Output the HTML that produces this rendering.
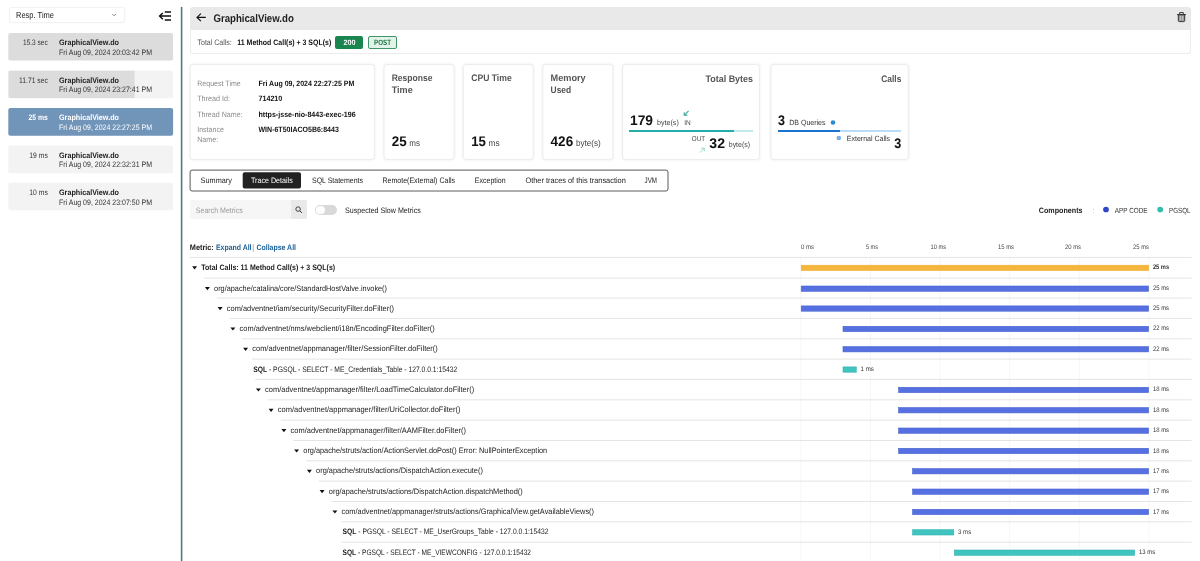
<!DOCTYPE html>
<html>
<head>
<meta charset="utf-8">
<title>GraphicalView.do</title>
<style>
*{box-sizing:border-box;margin:0;padding:0}
html,body{width:1200px;height:561px;overflow:hidden;background:#fff}
body{font-family:"Liberation Sans",sans-serif;color:#222;position:relative;font-size:8px}
.abs{position:absolute}
.t{position:absolute;white-space:nowrap;line-height:1;transform-origin:0 0}
b{font-weight:bold}
#dd{left:8.8px;top:7px;width:116px;height:16px;border-radius:3px;border:1px solid #f2f2f2;box-shadow:0 0 2px rgba(0,0,0,.04);background:#fff}
.li{position:absolute;left:8px;width:165px;height:28px;border-radius:2px;background:#f3f3f3;overflow:hidden}
.li i{position:absolute;left:0;top:0;bottom:0;background:#dddddd}
.li.sel{background:#7194b9}
#divider{left:180.8px;top:7px;width:1.7px;height:561px;background:#4f7a80}
#hdr{left:189.6px;top:7px;width:1001.5px;height:23.3px;background:#e9e9e9;border-radius:3px 3px 0 0}
#sub{left:189.6px;top:30px;width:1001.5px;height:24px;background:#fff;border:1px solid #ececec;border-top:none;border-radius:0 0 3px 3px}
.badge{position:absolute;top:35.8px;height:13.2px;border-radius:2px}
.card{position:absolute;top:64.3px;height:95.6px;background:#fff;border:1px solid #ebebeb;border-radius:3px;box-shadow:0 0 2px rgba(0,0,0,.06)}
#tabs{left:189.6px;top:169.6px;width:479px;height:22px;border:1px solid #555;border-radius:2px;background:#fff}
#tabsel{left:242.7px;top:172.3px;width:58.3px;height:16.2px;background:#222;border-radius:2px}
.row{position:absolute;height:1px;background:#e6e6e6}
.tri{position:absolute;width:0;height:0;border-left:2.2px solid transparent;border-right:2.2px solid transparent;border-top:3px solid #111}
.bar{position:absolute;height:5.8px;background:#566fe0}
.bar.y{background:#f4b73f}
.bar.g{background:#3fc5c1}
.grid{position:absolute;top:257px;width:1px;height:304px;background:#f1f1f1}
</style>
</head>
<body>
<!-- SIDEBAR -->
<div class="abs" id="dd"></div>
<svg class="abs" style="left:0;top:0" width="182" height="30" viewBox="0 0 182 30"><path d="M112.3 14L114.1 15.8L115.9 14" fill="none" stroke="#777" stroke-width="0.9"/><path d="M164.8 12.05H171M159.8 16.05H171M164.8 19.95H171M162.8 12.9L159.6 16.05L162.8 19.2" fill="none" stroke="#111" stroke-width="1.45"/></svg>

<svg class="abs" style="left:0;top:0" width="186" height="561" viewBox="0 0 186 561"><defs><clipPath id="c2"><rect x="8.3" y="70.4" width="164.8" height="27.9" rx="2"/></clipPath></defs><rect x="8.3" y="32.9" width="164.8" height="27.7" rx="2" fill="#dcdcdc"/><rect x="8.3" y="70.4" width="164.8" height="27.9" rx="2" fill="#f3f3f3"/><rect x="8.3" y="107.9" width="164.8" height="27.8" rx="2" fill="#7194b9"/><rect x="8.3" y="145.4" width="164.8" height="27.8" rx="2" fill="#f3f3f3"/><rect x="8.3" y="182.8" width="164.8" height="27.4" rx="2" fill="#f3f3f3"/><rect x="8.3" y="70.4" width="126.3" height="27.9" fill="#dcdcdc" clip-path="url(#c2)"/><rect x="180.8" y="7" width="1.6" height="554" fill="#4f7a80"/></svg>

<!-- HEADER -->
<div class="abs" id="hdr"></div>
<svg class="abs" style="left:189px;top:7px" width="1003" height="24" viewBox="189 7 1003 24"><path d="M205.8 17.4H197.2M200.9 13.7L197 17.4L200.9 21.1" fill="none" stroke="#111" stroke-width="1.15"/><path d="M1177 14.6H1186M1179.7 14.4V12.6H1183.3V14.4" fill="none" stroke="#333" stroke-width="1"/><path d="M1178.3 14.8V20.6Q1178.3 21.6 1179.3 21.6H1183.7Q1184.7 21.6 1184.7 20.6V14.8Z" fill="#9a9a9a" stroke="#333" stroke-width="1"/><path d="M1180.4 16V20.4M1182.6 16V20.4" stroke="#ddd" stroke-width="0.6"/></svg>
<div class="abs" id="sub"></div>
<div class="badge" style="left:335.4px;width:28.1px;background:#1b8550"></div>
<div class="badge" style="left:368px;width:28.9px;background:#e4f3ea;border:1px solid #3f9466"></div>

<!-- CARDS -->
<svg class="abs" style="left:0;top:0" width="1200" height="170" viewBox="0 0 1200 170"><rect x="189.4" y="63.7" width="185.8" height="96.6" rx="3.5" fill="none" stroke="#000" stroke-opacity="0.025" stroke-width="2.4"/><rect x="190.2" y="64.5" width="184.2" height="95" rx="3" fill="#fff" stroke="#ececec" stroke-width="1"/><rect x="383.3" y="63.7" width="71.5" height="96.6" rx="3.5" fill="none" stroke="#000" stroke-opacity="0.025" stroke-width="2.4"/><rect x="384.1" y="64.5" width="69.9" height="95" rx="3" fill="#fff" stroke="#ececec" stroke-width="1"/><rect x="462.5" y="63.7" width="71.5" height="96.6" rx="3.5" fill="none" stroke="#000" stroke-opacity="0.025" stroke-width="2.4"/><rect x="463.3" y="64.5" width="69.9" height="95" rx="3" fill="#fff" stroke="#ececec" stroke-width="1"/><rect x="542.0" y="63.7" width="71.6" height="96.6" rx="3.5" fill="none" stroke="#000" stroke-opacity="0.025" stroke-width="2.4"/><rect x="542.8" y="64.5" width="70.0" height="95" rx="3" fill="#fff" stroke="#ececec" stroke-width="1"/><rect x="621.7" y="63.7" width="138.6" height="96.6" rx="3.5" fill="none" stroke="#000" stroke-opacity="0.025" stroke-width="2.4"/><rect x="622.5" y="64.5" width="137.0" height="95" rx="3" fill="#fff" stroke="#ececec" stroke-width="1"/><rect x="770.2" y="63.7" width="138.9" height="96.6" rx="3.5" fill="none" stroke="#000" stroke-opacity="0.025" stroke-width="2.4"/><rect x="771.0" y="64.5" width="137.3" height="95" rx="3" fill="#fff" stroke="#ececec" stroke-width="1"/></svg>
<svg class="abs" style="left:682.8px;top:109.7px" width="6.5" height="6.5" viewBox="0 0 7 7"><path d="M6 1L1.3 5.7M1.3 2.3V5.7H4.7" fill="none" stroke="#2fa58f" stroke-width="1.1"/></svg>
<div class="abs" style="left:629.3px;top:130.3px;width:124px;height:1.8px;background:#c2e8ea"></div>
<div class="abs" style="left:629.3px;top:130.3px;width:105.2px;height:1.8px;background:#22adab"></div>
<svg class="abs" style="left:699.3px;top:146.5px" width="6.5" height="6.5" viewBox="0 0 7 7"><path d="M1 6L5.7 1.3M2.3 1.3H5.7V4.7" fill="none" stroke="#7fd4c4" stroke-width="0.9"/></svg>
<svg class="abs" style="left:826px;top:116px" width="20" height="28" viewBox="826 116 20 28"><circle cx="833" cy="122.5" r="2.3" fill="#2a8ad4"/><circle cx="838.8" cy="138" r="2.3" fill="#79afe2"/></svg>
<div class="abs" style="left:778px;top:130.3px;width:123.3px;height:1.8px;background:#bcdcf6"></div>
<div class="abs" style="left:778px;top:130.3px;width:61.5px;height:1.8px;background:#1a73d1"></div>

<!-- TABS -->
<svg class="abs" style="left:185px;top:165px" width="490" height="32" viewBox="185 165 490 32"><rect x="190.1" y="170.1" width="477.9" height="20.9" rx="2" fill="#fff" stroke="#5a5a5a" stroke-width="1"/><rect x="242.7" y="172.3" width="58.3" height="16.2" rx="2" fill="#222"/></svg>

<!-- SEARCH -->
<div class="abs" style="left:190.2px;top:200.4px;width:117.1px;height:18.4px;background:#f6f6f6;border-radius:2px"></div>
<div class="abs" style="left:290.8px;top:200.4px;width:16.5px;height:18.4px;background:#e9e9e9;border-radius:0 2px 2px 0"></div>
<svg class="abs" style="left:295px;top:206.3px" width="7.5" height="7.5" viewBox="0 0 9 9"><circle cx="3.7" cy="3.7" r="2.7" fill="none" stroke="#333" stroke-width="1.1"/><path d="M5.7 5.7L8.3 8.3" stroke="#333" stroke-width="1.2"/></svg>
<div class="abs" style="left:315.2px;top:204.6px;width:22.3px;height:10.4px;border-radius:5.2px;background:#d9d9d9"></div>
<div class="abs" style="left:316.2px;top:205.6px;width:8.4px;height:8.4px;border-radius:50%;background:#fff"></div>
<svg class="abs" style="left:1100px;top:204px" width="66" height="12" viewBox="1100 204 66 12"><circle cx="1106" cy="209.5" r="2.85" fill="#2f47c8"/><circle cx="1160.2" cy="209.5" r="2.85" fill="#2fbfaa"/></svg>

<svg class="abs" style="left:0;top:0" width="1200" height="561" viewBox="0 0 1200 561"><rect x="800.4" y="257.4" width="1" height="304" fill="#f7f7f7"/>
<rect x="870.0" y="257.4" width="1" height="304" fill="#f7f7f7"/>
<rect x="939.6" y="257.4" width="1" height="304" fill="#f7f7f7"/>
<rect x="1009.2" y="257.4" width="1" height="304" fill="#f7f7f7"/>
<rect x="1078.8" y="257.4" width="1" height="304" fill="#f7f7f7"/>
<rect x="1148.4" y="257.4" width="1" height="304" fill="#f7f7f7"/>
<path d="M192.1 266.3h5l-2.5 3.2z" fill="#111"/>
<rect x="189.6" y="256.9" width="1001.9" height="1" fill="#e4e4e4"/>
<rect x="801.2" y="265.2" width="347.4" height="5.3" fill="#f5b63e" stroke="#f0b030" stroke-width="0.6"/>
<path d="M204.9 287.1h5l-2.5 3.2z" fill="#111"/>
<rect x="204.2" y="277.6" width="987.4" height="1" fill="#e4e4e4"/>
<rect x="801.2" y="286.0" width="347.4" height="5.3" fill="#5670e2" stroke="#4863d0" stroke-width="0.6"/>
<path d="M217.6 307.0h5l-2.5 3.2z" fill="#111"/>
<rect x="216.9" y="297.6" width="974.6" height="1" fill="#e4e4e4"/>
<rect x="801.2" y="305.9" width="347.4" height="5.3" fill="#5670e2" stroke="#4863d0" stroke-width="0.6"/>
<path d="M230.4 327.4h5l-2.5 3.2z" fill="#111"/>
<rect x="229.7" y="317.9" width="961.9" height="1" fill="#e4e4e4"/>
<rect x="843.0" y="326.3" width="305.6" height="5.3" fill="#5670e2" stroke="#4863d0" stroke-width="0.6"/>
<path d="M243.1 347.7h5l-2.5 3.2z" fill="#111"/>
<rect x="242.4" y="338.3" width="949.1" height="1" fill="#e4e4e4"/>
<rect x="843.0" y="346.6" width="305.6" height="5.3" fill="#5670e2" stroke="#4863d0" stroke-width="0.6"/>
<rect x="252.2" y="358.6" width="939.3" height="1" fill="#e4e4e4"/>
<rect x="843.0" y="366.9" width="13.3" height="5.3" fill="#3fc4c0" stroke="#35b5b2" stroke-width="0.6"/>
<path d="M255.9 388.4h5l-2.5 3.2z" fill="#111"/>
<rect x="255.2" y="378.9" width="936.4" height="1" fill="#e4e4e4"/>
<rect x="898.6" y="387.3" width="250.0" height="5.3" fill="#5670e2" stroke="#4863d0" stroke-width="0.6"/>
<path d="M268.6 408.7h5l-2.5 3.2z" fill="#111"/>
<rect x="267.9" y="399.3" width="923.6" height="1" fill="#e4e4e4"/>
<rect x="898.6" y="407.6" width="250.0" height="5.3" fill="#5670e2" stroke="#4863d0" stroke-width="0.6"/>
<path d="M281.4 429.1h5l-2.5 3.2z" fill="#111"/>
<rect x="280.6" y="419.6" width="910.9" height="1" fill="#e4e4e4"/>
<rect x="898.6" y="428.0" width="250.0" height="5.3" fill="#5670e2" stroke="#4863d0" stroke-width="0.6"/>
<path d="M294.1 449.4h5l-2.5 3.2z" fill="#111"/>
<rect x="293.4" y="440.0" width="898.1" height="1" fill="#e4e4e4"/>
<rect x="898.6" y="448.3" width="250.0" height="5.3" fill="#5670e2" stroke="#4863d0" stroke-width="0.6"/>
<path d="M306.9 469.7h5l-2.5 3.2z" fill="#111"/>
<rect x="306.1" y="460.3" width="885.4" height="1" fill="#e4e4e4"/>
<rect x="912.6" y="468.6" width="236.0" height="5.3" fill="#5670e2" stroke="#4863d0" stroke-width="0.6"/>
<path d="M319.6 490.1h5l-2.5 3.2z" fill="#111"/>
<rect x="318.9" y="480.6" width="872.6" height="1" fill="#e4e4e4"/>
<rect x="912.6" y="489.0" width="236.0" height="5.3" fill="#5670e2" stroke="#4863d0" stroke-width="0.6"/>
<path d="M332.4 510.4h5l-2.5 3.2z" fill="#111"/>
<rect x="331.6" y="501.0" width="859.9" height="1" fill="#e4e4e4"/>
<rect x="912.6" y="509.3" width="236.0" height="5.3" fill="#5670e2" stroke="#4863d0" stroke-width="0.6"/>
<rect x="341.6" y="521.3" width="849.9" height="1" fill="#e4e4e4"/>
<rect x="912.6" y="529.7" width="41.2" height="5.3" fill="#3fc4c0" stroke="#35b5b2" stroke-width="0.6"/>
<rect x="341.6" y="541.7" width="849.9" height="1" fill="#e4e4e4"/>
<rect x="954.3" y="550.0" width="180.4" height="5.3" fill="#3fc4c0" stroke="#35b5b2" stroke-width="0.6"/></svg>
<svg class="abs" style="left:0;top:0;will-change:transform" width="1200" height="561" viewBox="0 0 1200 561" font-family="'Liberation Sans',sans-serif" text-rendering="geometricPrecision">
<text x="16.0" y="18.1" font-size="8.8" fill="#222" textLength="38.0" lengthAdjust="spacingAndGlyphs">Resp. Time</text>
<text x="23.0" y="45.3" font-size="7.9" fill="#333" textLength="24.8" lengthAdjust="spacingAndGlyphs">15.3 sec</text>
<text x="59.0" y="45.3" font-size="7.9" fill="#222" font-weight="bold" textLength="60.0" lengthAdjust="spacingAndGlyphs">GraphicalView.do</text>
<text x="59.0" y="54.8" font-size="7.9" fill="#333" textLength="93.0" lengthAdjust="spacingAndGlyphs">Fri Aug 09, 2024 20:03:42 PM</text>
<text x="19.0" y="82.8" font-size="7.9" fill="#333" textLength="28.8" lengthAdjust="spacingAndGlyphs">11.71 sec</text>
<text x="59.0" y="82.8" font-size="7.9" fill="#222" font-weight="bold" textLength="60.0" lengthAdjust="spacingAndGlyphs">GraphicalView.do</text>
<text x="59.0" y="92.3" font-size="7.9" fill="#333" textLength="93.0" lengthAdjust="spacingAndGlyphs">Fri Aug 09, 2024 23:27:41 PM</text>
<text x="28.5" y="120.3" font-size="7.9" fill="#fff" font-weight="bold" textLength="19.3" lengthAdjust="spacingAndGlyphs">25 ms</text>
<text x="59.0" y="120.3" font-size="7.9" fill="#fff" font-weight="bold" textLength="60.0" lengthAdjust="spacingAndGlyphs">GraphicalView.do</text>
<text x="59.0" y="129.8" font-size="7.9" fill="#fff" textLength="93.0" lengthAdjust="spacingAndGlyphs">Fri Aug 09, 2024 22:27:25 PM</text>
<text x="29.3" y="157.8" font-size="7.9" fill="#333" textLength="18.5" lengthAdjust="spacingAndGlyphs">19 ms</text>
<text x="59.0" y="157.8" font-size="7.9" fill="#222" font-weight="bold" textLength="60.0" lengthAdjust="spacingAndGlyphs">GraphicalView.do</text>
<text x="59.0" y="167.3" font-size="7.9" fill="#333" textLength="93.0" lengthAdjust="spacingAndGlyphs">Fri Aug 09, 2024 22:32:31 PM</text>
<text x="29.3" y="195.3" font-size="7.9" fill="#333" textLength="18.5" lengthAdjust="spacingAndGlyphs">10 ms</text>
<text x="59.0" y="195.3" font-size="7.9" fill="#222" font-weight="bold" textLength="60.0" lengthAdjust="spacingAndGlyphs">GraphicalView.do</text>
<text x="59.0" y="204.8" font-size="7.9" fill="#333" textLength="93.0" lengthAdjust="spacingAndGlyphs">Fri Aug 09, 2024 23:07:50 PM</text>
<text x="213.4" y="21.6" font-size="11" fill="#222" font-weight="bold" textLength="80.4" lengthAdjust="spacingAndGlyphs">GraphicalView.do</text>
<text x="197.5" y="45.3" font-size="7.9" fill="#555" textLength="34.3" lengthAdjust="spacingAndGlyphs">Total Calls:</text>
<text x="237.3" y="45.3" font-size="7.9" fill="#111" font-weight="bold" textLength="93.9" lengthAdjust="spacingAndGlyphs">11 Method Call(s) + 3 SQL(s)</text>
<text x="343.5" y="45.2" font-size="7.7" fill="#fff" font-weight="bold" textLength="12.0" lengthAdjust="spacingAndGlyphs">200</text>
<text x="374.0" y="45.2" font-size="7.7" fill="#1b7a45" font-weight="bold" textLength="17.0" lengthAdjust="spacingAndGlyphs">POST</text>
<text x="197.2" y="85.8" font-size="7.7" fill="#8a8a8a" textLength="43.6" lengthAdjust="spacingAndGlyphs">Request Time</text>
<text x="258.5" y="85.8" font-size="7.7" fill="#111" font-weight="bold" textLength="95.8" lengthAdjust="spacingAndGlyphs">Fri Aug 09, 2024 22:27:25 PM</text>
<text x="197.2" y="101.2" font-size="7.7" fill="#8a8a8a" textLength="32.7" lengthAdjust="spacingAndGlyphs">Thread Id:</text>
<text x="258.5" y="101.2" font-size="7.7" fill="#111" font-weight="bold" textLength="23.8" lengthAdjust="spacingAndGlyphs">714210</text>
<text x="197.2" y="116.5" font-size="7.7" fill="#8a8a8a" textLength="45.4" lengthAdjust="spacingAndGlyphs">Thread Name:</text>
<text x="258.5" y="116.5" font-size="7.7" fill="#111" font-weight="bold" textLength="97.1" lengthAdjust="spacingAndGlyphs">https-jsse-nio-8443-exec-196</text>
<text x="197.2" y="132.0" font-size="7.7" fill="#8a8a8a" textLength="26.7" lengthAdjust="spacingAndGlyphs">Instance</text>
<text x="197.2" y="141.8" font-size="7.7" fill="#8a8a8a" textLength="21.1" lengthAdjust="spacingAndGlyphs">Name:</text>
<text x="258.5" y="132.0" font-size="7.7" fill="#111" font-weight="bold" textLength="80.3" lengthAdjust="spacingAndGlyphs">WIN-6T50IACO5B6:8443</text>
<text x="391.7" y="81.2" font-size="9.5" fill="#555" font-weight="bold" textLength="40.7" lengthAdjust="spacingAndGlyphs">Response</text>
<text x="391.7" y="92.9" font-size="9.5" fill="#555" font-weight="bold" textLength="21.0" lengthAdjust="spacingAndGlyphs">Time</text>
<text x="391.7" y="146.3" font-size="13.9" fill="#111" font-weight="bold" textLength="14.9" lengthAdjust="spacingAndGlyphs">25</text>
<text x="409.3" y="146.3" font-size="8.8" fill="#444" textLength="10.7" lengthAdjust="spacingAndGlyphs">ms</text>
<text x="471.2" y="81.2" font-size="9.5" fill="#555" font-weight="bold" textLength="40.5" lengthAdjust="spacingAndGlyphs">CPU Time</text>
<text x="471.2" y="146.3" font-size="13.9" fill="#111" font-weight="bold" textLength="14.7" lengthAdjust="spacingAndGlyphs">15</text>
<text x="488.5" y="146.3" font-size="8.8" fill="#444" textLength="11.1" lengthAdjust="spacingAndGlyphs">ms</text>
<text x="550.6" y="81.2" font-size="9.5" fill="#555" font-weight="bold" textLength="35.1" lengthAdjust="spacingAndGlyphs">Memory</text>
<text x="550.6" y="92.9" font-size="9.5" fill="#555" font-weight="bold" textLength="20.6" lengthAdjust="spacingAndGlyphs">Used</text>
<text x="550.6" y="146.3" font-size="13.9" fill="#111" font-weight="bold" textLength="22.6" lengthAdjust="spacingAndGlyphs">426</text>
<text x="576.0" y="146.3" font-size="8.8" fill="#444" textLength="24.8" lengthAdjust="spacingAndGlyphs">byte(s)</text>
<text x="705.5" y="81.5" font-size="9.5" fill="#555" font-weight="bold" textLength="47.5" lengthAdjust="spacingAndGlyphs">Total Bytes</text>
<text x="630.0" y="125.0" font-size="13.9" fill="#111" font-weight="bold" textLength="23.0" lengthAdjust="spacingAndGlyphs">179</text>
<text x="657.0" y="124.7" font-size="7.55" fill="#444" textLength="21.8" lengthAdjust="spacingAndGlyphs">byte(s)</text>
<text x="684.3" y="124.7" font-size="7.1" fill="#444" textLength="6.5" lengthAdjust="spacingAndGlyphs">IN</text>
<text x="691.8" y="141.3" font-size="7.1" fill="#444" textLength="13.2" lengthAdjust="spacingAndGlyphs">OUT</text>
<text x="709.3" y="147.5" font-size="13.9" fill="#111" font-weight="bold" textLength="15.7" lengthAdjust="spacingAndGlyphs">32</text>
<text x="728.8" y="147.2" font-size="7.55" fill="#444" textLength="21.2" lengthAdjust="spacingAndGlyphs">byte(s)</text>
<text x="881.3" y="81.5" font-size="9.5" fill="#555" font-weight="bold" textLength="20.0" lengthAdjust="spacingAndGlyphs">Calls</text>
<text x="778.0" y="125.0" font-size="13.9" fill="#111" font-weight="bold" textLength="7.0" lengthAdjust="spacingAndGlyphs">3</text>
<text x="789.3" y="124.7" font-size="7.55" fill="#333" textLength="36.2" lengthAdjust="spacingAndGlyphs">DB Queries</text>
<text x="846.8" y="141.0" font-size="7.55" fill="#333" textLength="43.2" lengthAdjust="spacingAndGlyphs">External Calls</text>
<text x="894.3" y="147.5" font-size="13.9" fill="#111" font-weight="bold" textLength="7.0" lengthAdjust="spacingAndGlyphs">3</text>
<text x="200.6" y="183.3" font-size="7.9" fill="#222" textLength="31.3" lengthAdjust="spacingAndGlyphs">Summary</text>
<text x="251.0" y="183.3" font-size="7.9" fill="#fff" textLength="41.7" lengthAdjust="spacingAndGlyphs">Trace Details</text>
<text x="312.0" y="183.3" font-size="7.9" fill="#222" textLength="51.0" lengthAdjust="spacingAndGlyphs">SQL Statements</text>
<text x="382.5" y="183.3" font-size="7.9" fill="#222" textLength="72.5" lengthAdjust="spacingAndGlyphs">Remote(External) Calls</text>
<text x="474.8" y="183.3" font-size="7.9" fill="#222" textLength="30.8" lengthAdjust="spacingAndGlyphs">Exception</text>
<text x="525.4" y="183.3" font-size="7.9" fill="#222" textLength="100.4" lengthAdjust="spacingAndGlyphs">Other traces of this transaction</text>
<text x="644.6" y="183.3" font-size="7.9" fill="#222" textLength="12.4" lengthAdjust="spacingAndGlyphs">JVM</text>
<text x="195.8" y="212.5" font-size="7.9" fill="#999" textLength="46.9" lengthAdjust="spacingAndGlyphs">Search Metrics</text>
<text x="345.0" y="212.5" font-size="7.9" fill="#222" textLength="75.8" lengthAdjust="spacingAndGlyphs">Suspected Slow Metrics</text>
<text x="1038.8" y="212.7" font-size="7.9" fill="#222" font-weight="bold" textLength="43.7" lengthAdjust="spacingAndGlyphs">Components</text>
<text x="1092.7" y="212.5" font-size="7.9" fill="#888" textLength="1.3" lengthAdjust="spacingAndGlyphs">:</text>
<text x="1114.8" y="212.5" font-size="7.4" fill="#333" textLength="32.7" lengthAdjust="spacingAndGlyphs">APP CODE</text>
<text x="1169.0" y="212.5" font-size="7.4" fill="#333" textLength="21.5" lengthAdjust="spacingAndGlyphs">PGSQL</text>
<text x="189.8" y="250.2" font-size="7.9" fill="#222" font-weight="bold" textLength="24.0" lengthAdjust="spacingAndGlyphs">Metric:</text>
<text x="216.0" y="250.2" font-size="7.9" fill="#1a5f96" font-weight="bold" textLength="35.5" lengthAdjust="spacingAndGlyphs">Expand All</text>
<text x="252.6" y="250.2" font-size="7.9" fill="#333" textLength="1.2" lengthAdjust="spacingAndGlyphs">|</text>
<text x="256.5" y="250.2" font-size="7.9" fill="#1a5f96" font-weight="bold" textLength="39.5" lengthAdjust="spacingAndGlyphs">Collapse All</text>
<text x="801.0" y="248.7" font-size="6.6" fill="#444" textLength="13.0" lengthAdjust="spacingAndGlyphs">0 ms</text>
<text x="866.0" y="248.7" font-size="6.6" fill="#444" textLength="12.0" lengthAdjust="spacingAndGlyphs">5 ms</text>
<text x="930.5" y="248.7" font-size="6.6" fill="#444" textLength="15.5" lengthAdjust="spacingAndGlyphs">10 ms</text>
<text x="998.0" y="248.7" font-size="6.6" fill="#444" textLength="16.0" lengthAdjust="spacingAndGlyphs">15 ms</text>
<text x="1065.0" y="248.7" font-size="6.6" fill="#444" textLength="16.0" lengthAdjust="spacingAndGlyphs">20 ms</text>
<text x="1133.0" y="248.7" font-size="6.6" fill="#444" textLength="16.0" lengthAdjust="spacingAndGlyphs">25 ms</text>
<text x="201.3" y="269.9" font-size="7.9" fill="#222" font-weight="bold" textLength="133.9" lengthAdjust="spacingAndGlyphs">Total Calls: 11 Method Call(s) + 3 SQL(s)</text>
<text x="1152.9" y="269.4" font-size="6.6" fill="#333" font-weight="bold" textLength="16.2" lengthAdjust="spacingAndGlyphs">25 ms</text>
<text x="214.1" y="290.6" font-size="7.9" fill="#222" textLength="172.9" lengthAdjust="spacingAndGlyphs">org/apache/catalina/core/StandardHostValve.invoke()</text>
<text x="1152.9" y="290.1" font-size="6.6" fill="#333" textLength="16.2" lengthAdjust="spacingAndGlyphs">25 ms</text>
<text x="226.8" y="310.6" font-size="7.9" fill="#222" textLength="167.3" lengthAdjust="spacingAndGlyphs">com/adventnet/iam/security/SecurityFilter.doFilter()</text>
<text x="1152.9" y="310.1" font-size="6.6" fill="#333" textLength="16.2" lengthAdjust="spacingAndGlyphs">25 ms</text>
<text x="239.6" y="330.9" font-size="7.9" fill="#222" textLength="195.2" lengthAdjust="spacingAndGlyphs">com/adventnet/nms/webclient/i18n/EncodingFilter.doFilter()</text>
<text x="1152.9" y="330.4" font-size="6.6" fill="#333" textLength="16.2" lengthAdjust="spacingAndGlyphs">22 ms</text>
<text x="252.3" y="351.3" font-size="7.9" fill="#222" textLength="185.5" lengthAdjust="spacingAndGlyphs">com/adventnet/appmanager/filter/SessionFilter.doFilter()</text>
<text x="1152.9" y="350.8" font-size="6.6" fill="#333" textLength="16.2" lengthAdjust="spacingAndGlyphs">22 ms</text>
<text x="253.2" y="371.6" font-size="7.9" fill="#222" textLength="204.1" lengthAdjust="spacingAndGlyphs"><tspan font-weight="bold">SQL</tspan> - PGSQL - SELECT - ME_Credentials_Table - 127.0.0.1:15432</text>
<text x="860.6" y="371.1" font-size="6.6" fill="#333" textLength="13.2" lengthAdjust="spacingAndGlyphs">1 ms</text>
<text x="265.1" y="391.9" font-size="7.9" fill="#222" textLength="209.1" lengthAdjust="spacingAndGlyphs">com/adventnet/appmanager/filter/LoadTimeCalculator.doFilter()</text>
<text x="1152.9" y="391.4" font-size="6.6" fill="#333" textLength="16.2" lengthAdjust="spacingAndGlyphs">18 ms</text>
<text x="277.8" y="412.3" font-size="7.9" fill="#222" textLength="182.7" lengthAdjust="spacingAndGlyphs">com/adventnet/appmanager/filter/UriCollector.doFilter()</text>
<text x="1152.9" y="411.8" font-size="6.6" fill="#333" textLength="16.2" lengthAdjust="spacingAndGlyphs">18 ms</text>
<text x="290.6" y="432.6" font-size="7.9" fill="#222" textLength="175.4" lengthAdjust="spacingAndGlyphs">com/adventnet/appmanager/filter/AAMFilter.doFilter()</text>
<text x="1152.9" y="432.1" font-size="6.6" fill="#333" textLength="16.2" lengthAdjust="spacingAndGlyphs">18 ms</text>
<text x="303.3" y="453.0" font-size="7.9" fill="#222" textLength="243.9" lengthAdjust="spacingAndGlyphs">org/apache/struts/action/ActionServlet.doPost() Error: NullPointerException</text>
<text x="1152.9" y="452.5" font-size="6.6" fill="#333" textLength="16.2" lengthAdjust="spacingAndGlyphs">18 ms</text>
<text x="316.1" y="473.3" font-size="7.9" fill="#222" textLength="166.8" lengthAdjust="spacingAndGlyphs">org/apache/struts/actions/DispatchAction.execute()</text>
<text x="1152.9" y="472.8" font-size="6.6" fill="#333" textLength="16.2" lengthAdjust="spacingAndGlyphs">17 ms</text>
<text x="328.8" y="493.6" font-size="7.9" fill="#222" textLength="194.0" lengthAdjust="spacingAndGlyphs">org/apache/struts/actions/DispatchAction.dispatchMethod()</text>
<text x="1152.9" y="493.1" font-size="6.6" fill="#333" textLength="16.2" lengthAdjust="spacingAndGlyphs">17 ms</text>
<text x="341.6" y="514.0" font-size="7.9" fill="#222" textLength="252.4" lengthAdjust="spacingAndGlyphs">com/adventnet/appmanager/struts/actions/GraphicalView.getAvailableViews()</text>
<text x="1152.9" y="513.5" font-size="6.6" fill="#333" textLength="16.2" lengthAdjust="spacingAndGlyphs">17 ms</text>
<text x="342.6" y="534.3" font-size="7.9" fill="#222" textLength="206.0" lengthAdjust="spacingAndGlyphs"><tspan font-weight="bold">SQL</tspan> - PGSQL - SELECT - ME_UserGroups_Table - 127.0.0.1:15432</text>
<text x="958.0" y="533.8" font-size="6.6" fill="#333" textLength="13.2" lengthAdjust="spacingAndGlyphs">3 ms</text>
<text x="342.6" y="554.7" font-size="7.9" fill="#222" textLength="188.4" lengthAdjust="spacingAndGlyphs"><tspan font-weight="bold">SQL</tspan> - PGSQL - SELECT - ME_VIEWCONFIG - 127.0.0.1:15432</text>
<text x="1139.0" y="554.2" font-size="6.6" fill="#333" textLength="16.2" lengthAdjust="spacingAndGlyphs">13 ms</text>
</svg>
</body>
</html>
